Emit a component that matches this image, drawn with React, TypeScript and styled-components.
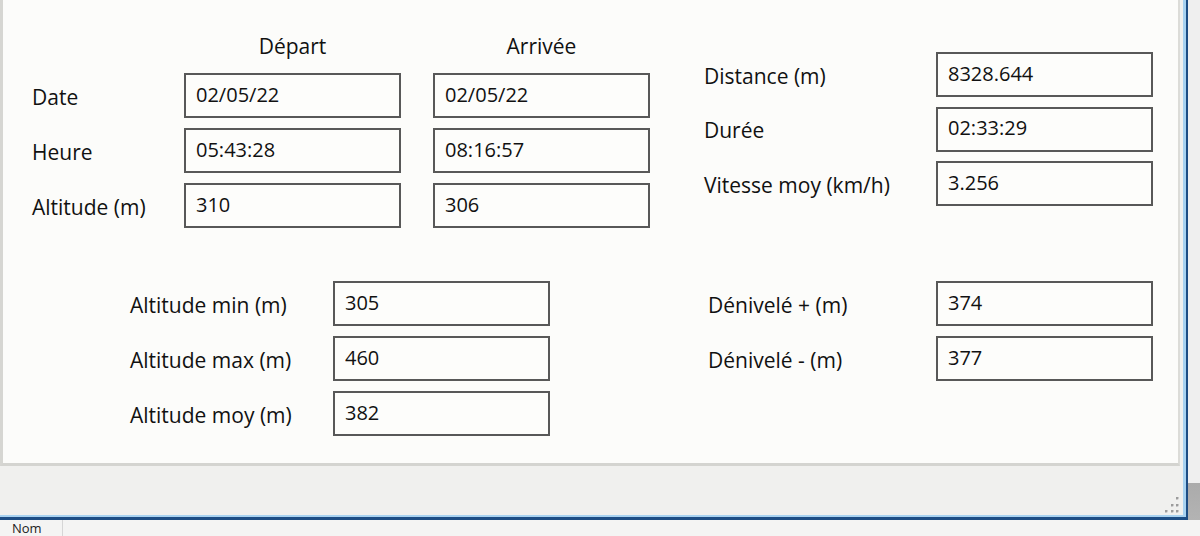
import React from "react";
import styled, { createGlobalStyle } from "styled-components";

const Global = createGlobalStyle`
  html, body { margin: 0; padding: 0; background: #f0f0f0; }
  body { font-family: "Open Sans", "Noto Sans", sans-serif; color: #111; }
  #root { width: 1200px; height: 536px; overflow: hidden; }
`;

const Page = styled.div`
  display: flex;
  flex-direction: column;
  width: 1200px;
  height: 536px;
`;

const Upper = styled.div`
  display: flex;
  height: 520px;
`;

const Window = styled.div`
  box-sizing: border-box;
  width: 1188px;
  height: 520px;
  flex: none;
  display: flex;
  flex-direction: column;
  background: #f0f0ee;
  padding: 0 6px 2px 0;
  border-right: 2px solid #1d4d84;
  border-bottom: 3px solid #1d4d84;
  box-shadow: inset -3px 0 0 #a8d2f0, inset 0 -2px 0 #a8d2f0;
`;

const RightStrip = styled.div`
  flex: 1;
  background: linear-gradient(to bottom, #efefef 0, #efefef 483px, #ababab 483px, #b3b3b3 520px);
`;

const Panel = styled.div`
  box-sizing: border-box;
  height: 466px;
  background: #fcfcfa;
  border-left: 3px solid #d6d6d2;
  border-right: 2px solid #dcdcd8;
  border-bottom: 3px solid #d4d4d0;
  display: flex;
  flex-direction: column;
  padding-left: 29px;
`;

const Row = styled.div<{ $top?: number; $left?: number }>`
  display: flex;
  align-items: flex-start;
  margin-top: ${(p) => p.$top ?? 0}px;
  margin-left: ${(p) => p.$left ?? 0}px;
`;

const Grid = styled.div<{ $cols: string; $rows: string; $gap: number; $colGap?: number; $top?: number; $left?: number }>`
  display: grid;
  grid-template-columns: ${(p) => p.$cols};
  grid-template-rows: ${(p) => p.$rows};
  row-gap: ${(p) => p.$gap}px;
  column-gap: ${(p) => p.$colGap ?? 0}px;
  margin-top: ${(p) => p.$top ?? 0}px;
  margin-left: ${(p) => p.$left ?? 0}px;
`;

const Header = styled.div`
  align-self: end;
  text-align: center;
  font-size: 21px;
  line-height: 28px;
  margin-bottom: 3px;
`;

const Label = styled.div`
  align-self: center;
  font-size: 21px;
  line-height: 28px;
  white-space: nowrap;
  padding-top: 2px;
`;

const Field = styled.input`
  box-sizing: border-box;
  width: 217px;
  height: 45px;
  margin: 0;
  border: 2px solid #585858;
  border-radius: 0;
  background: #fdfdfb;
  padding: 0 0 3px 10px;
  font-family: "Open Sans", "Noto Sans", sans-serif;
  font-size: 20px;
  color: #111;
  outline: none;
`;

const Status = styled.div`
  height: 49px;
  display: flex;
  justify-content: flex-end;
  align-items: flex-end;
  padding: 0 1px 2px 0;
  box-sizing: border-box;
`;

const TaskStrip = styled.div`
  height: 16px;
  background: #f4f4f3;
  display: flex;
  overflow: hidden;
`;

const TaskCell = styled.div`
  width: 63px;
  box-sizing: border-box;
  border-right: 1px solid #d6d6d6;
  padding: 0 0 0 12px;
  font-size: 13px;
  line-height: 16px;
  color: #222;
`;

const Grip = () => (
  <svg width="14" height="16" viewBox="0 0 14 16">
    {[
      [11, 0],
      [6, 7],
      [11, 7],
      [0, 13],
      [6, 13],
      [11, 13],
    ].map(([x, y], i) => (
      <g key={i}>
        <rect x={x + 1} y={y + 1} width="2" height="2" fill="#ffffff" />
        <rect x={x} y={y} width="2.5" height="2.5" fill="#9c9c9c" />
      </g>
    ))}
  </svg>
);

const top = [
  { label: "Date", dep: "02/05/22", arr: "02/05/22" },
  { label: "Heure", dep: "05:43:28", arr: "08:16:57" },
  { label: "Altitude (m)", dep: "310", arr: "306" },
];

const topRight = [
  { label: "Distance (m)", value: "8328.644" },
  { label: "Durée", value: "02:33:29" },
  { label: "Vitesse moy (km/h)", value: "3.256" },
];

const bottomLeft = [
  { label: "Altitude min (m)", value: "305" },
  { label: "Altitude max (m)", value: "460" },
  { label: "Altitude moy (m)", value: "382" },
];

const bottomRight = [
  { label: "Dénivelé + (m)", value: "374" },
  { label: "Dénivelé - (m)", value: "377" },
];

export default function App() {
  return (
    <>
      <Global />
      <Page>
        <Upper>
          <Window>
            <Panel>
              <Row>
                <Grid $cols="120px 217px 217px" $rows="63px 45px 45px 45px" $gap={10} $colGap={32}>
                  <div />
                  <Header>Départ</Header>
                  <Header>Arrivée</Header>
                  {top.map((r) => (
                    <React.Fragment key={r.label}>
                      <Label>{r.label}</Label>
                      <Field readOnly value={r.dep} />
                      <Field readOnly value={r.arr} />
                    </React.Fragment>
                  ))}
                </Grid>
                <Grid $cols="232px 217px" $rows="45px 45px 45px" $gap={9.5} $top={52} $left={54}>
                  {topRight.map((r) => (
                    <React.Fragment key={r.label}>
                      <Label>{r.label}</Label>
                      <Field readOnly value={r.value} />
                    </React.Fragment>
                  ))}
                </Grid>
              </Row>
              <Row $top={53} $left={98}>
                <Grid $cols="203px 217px" $rows="45px 45px 45px" $gap={10}>
                  {bottomLeft.map((r) => (
                    <React.Fragment key={r.label}>
                      <Label>{r.label}</Label>
                      <Field readOnly value={r.value} />
                    </React.Fragment>
                  ))}
                </Grid>
                <Grid $cols="228px 217px" $rows="45px 45px" $gap={10} $left={158}>
                  {bottomRight.map((r) => (
                    <React.Fragment key={r.label}>
                      <Label>{r.label}</Label>
                      <Field readOnly value={r.value} />
                    </React.Fragment>
                  ))}
                </Grid>
              </Row>
            </Panel>
            <Status>
              <Grip />
            </Status>
          </Window>
          <RightStrip />
        </Upper>
        <TaskStrip>
          <TaskCell>Nom</TaskCell>
        </TaskStrip>
      </Page>
    </>
  );
}
